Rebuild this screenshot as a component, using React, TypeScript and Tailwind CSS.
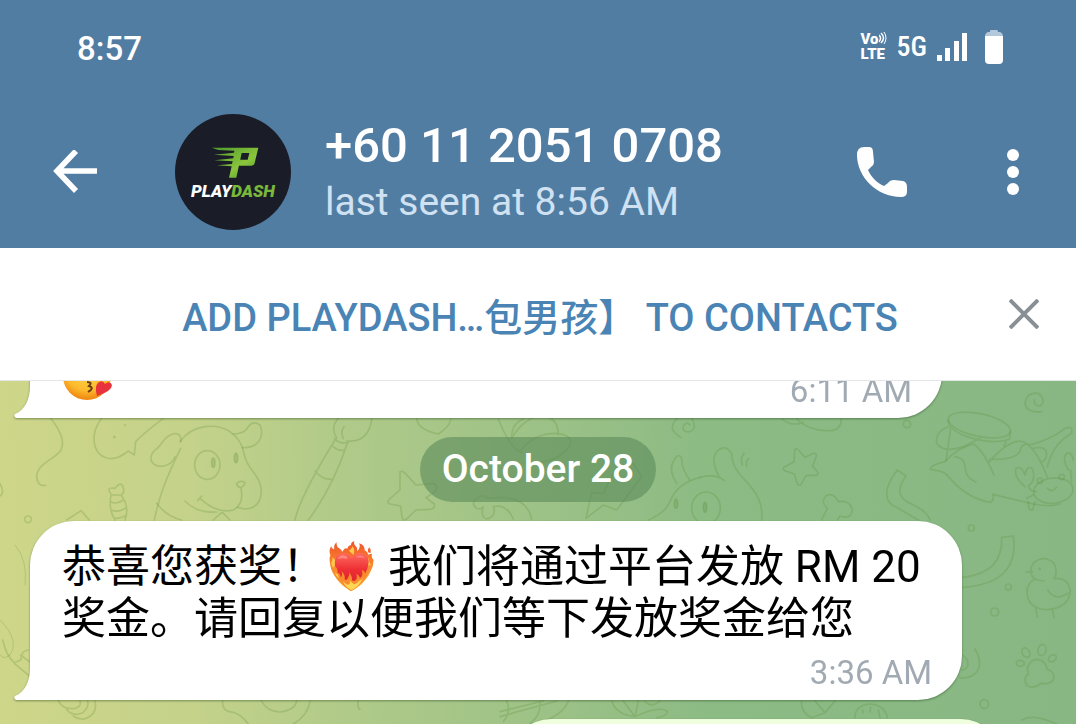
import React from "react";

interface BubbleProps {
  className?: string;
  children: React.ReactNode;
}

function ChatWallpaper() {
  return (
    <svg
      className="absolute inset-0 w-full h-full"
      viewBox="0 381 1076 343"
      preserveAspectRatio="xMidYMid slice"
      aria-hidden="true"
    >
      <defs>
        <linearGradient id="wall" gradientUnits="userSpaceOnUse" x1="0" y1="560" x2="1076" y2="540">
          <stop offset="0" stopColor="#ced689" />
          <stop offset="0.18" stopColor="#c4d28a" />
          <stop offset="0.32" stopColor="#b0ca89" />
          <stop offset="0.5" stopColor="#9dc287" />
          <stop offset="0.66" stopColor="#8cbb84" />
          <stop offset="1" stopColor="#88b784" />
        </linearGradient>
      </defs>
      <rect y="381" width="1076" height="343" fill="url(#wall)" />
      <g fill="none" stroke="#5c8c34" strokeOpacity="0.24" strokeWidth="5" strokeLinecap="round" strokeLinejoin="round">
        {/* dog, speech blob, candy and brush */}
        <g transform="translate(0 370) scale(.3333)">
          <path d="M152 145 Q200 205 183 240 C170 265 110 280 110 320 Q112 350 137 346" />
          <path d="M305 145 C270 190 275 250 320 264 Q350 272 385 243 L403 255 L407 215 Q430 190 490 145" />
          <path d="M463 450 C478 380 495 330 542 235 M540 215 C580 160 650 160 690 185 Q725 210 732 250 C740 300 780 310 784 360 Q784 415 735 417 L712 412" />
          <path d="M542 215 Q545 190 525 191 C490 195 485 230 465 240 C445 260 450 285 480 289 Q515 288 525 260 M700 192 Q735 192 745 170 Q760 150 780 165 C795 200 775 235 728 233" />
          <ellipse cx="622" cy="285" rx="38" ry="43" />
          <ellipse cx="640" cy="278" rx="5" ry="14" fill="#568b3c" fillOpacity="0.2" />
          <ellipse cx="708" cy="264" rx="5" ry="14" fill="#568b3c" fillOpacity="0.2" />
          <path d="M710 340 Q722 330 735 338 Q732 352 720 352 Q710 350 710 340 M722 352 Q735 400 700 420 Q650 432 600 385 M593 392 L605 378 M555 393 Q590 430 650 426 M470 400 Q500 440 545 450 M668 428 L690 450 M665 428 L640 450" />
          <path d="M335 375 Q315 350 345 355 Q365 330 370 355 Q375 370 362 375 Z M333 375 Q325 420 345 450 M363 375 Q390 410 375 450 M332 395 Q350 405 370 390 M334 420 Q355 430 380 412 M345 445 Q365 445 380 435" />
          <path d="M200 450 L243 422 L268 450 M0 340 Q15 370 0 378" />
          <circle cx="84" cy="448" r="10" />
          <circle cx="343" cy="201" r="2" />
          <circle cx="375" cy="165" r="1" />
          <path d="M885 450 Q900 380 1005 210 M925 450 Q1000 350 1042 220 M1003 205 Q1020 225 1045 217 M1000 230 Q1015 245 1035 240 M945 303 Q965 330 1000 328 M1010 205 Q990 170 1015 145 M1030 205 Q1020 185 1032 170 M1040 213 Q1105 220 1116 147" />
        </g>
        {/* star, leaf, bone, bolt and swirl */}
        <g transform="translate(340 370) scale(.3333)">
          <path d="M180 305 Q190 300 205 320 L228 345 L280 340 Q298 350 285 365 L258 383 L283 402 Q285 418 270 418 L228 420 L200 447 Q188 455 186 440 L182 408 L150 402 Q138 398 148 388 L180 360 Z" />
          <path d="M230 147 Q235 180 295 192 Q330 170 332 147 M475 147 Q510 235 545 248 M515 205 Q515 160 550 147 M515 205 Q560 130 620 140 Q655 150 655 195 M545 240 Q580 190 650 190 Q700 195 690 225 Q660 280 555 280" />
          <path d="M445 385 Q430 370 410 385 Q390 400 410 415 Q425 420 430 410 Q420 440 440 447 Q470 440 460 410 Q500 400 520 447 M445 385 Q560 370 575 447" />
          <path d="M738 445 L755 368 L790 370 L830 290 L880 280 L905 320 L830 420 L790 405 Z" />
          <path d="M1022 202 Q985 180 1003 155 Q1020 130 1055 145 Q1075 180 1045 186 Q1025 185 1030 168 Q1040 152 1050 165" />
          <path d="M1010 340 Q985 300 1000 275 Q1015 245 1025 265 Q1025 300 1050 330" />
          <path d="M925 450 Q975 430 990 395 Q1010 340 1080 322" />
          <ellipse cx="1008" cy="401" rx="5" ry="14" fill="#568b3c" fillOpacity="0.2" />
        </g>
        {/* creature, small star, bone, jumping cat with a drum, crab */}
        <g transform="translate(700 370) scale(.3333)">
          <path d="M0 322 Q50 310 72 332 M60 325 Q30 270 50 245 Q75 220 95 250 C95 300 130 320 160 360 Q190 400 185 450" />
          <ellipse cx="18" cy="414" rx="43" ry="48" />
          <ellipse cx="15" cy="412" rx="5" ry="15" fill="#568b3c" fillOpacity="0.2" />
          <path d="M132 250 Q120 265 127 285 M146 265 Q136 275 140 290" />
          <path d="M284 240 Q288 232 295 240 L315 262 L342 250 Q352 250 348 262 L338 288 L354 308 Q354 318 344 316 L318 317 L304 342 Q297 350 292 341 L283 312 L254 302 Q245 296 254 290 L282 275 Z" />
          <path d="M247 147 Q270 170 310 158 M290 147 Q330 185 390 182 Q425 180 423 147" />
          <circle cx="621" cy="162" r="11" />
          <path d="M365 450 L382 415 Q360 395 378 378 Q400 365 415 395 Q450 390 457 418 Q455 450 420 438 L412 450" />
          <path d="M592 300 L618 318 Q580 370 620 395 Q680 420 690 450 M592 300 C545 360 555 400 590 412 Q620 430 655 450" />
          <path d="M1025 125 Q980 130 975 100 Q980 65 1015 70 Q1040 90 1022 107 Q1000 110 1003 90" />
          <ellipse cx="838" cy="165" rx="95" ry="34" transform="rotate(12 838 165)" />
          <path d="M745 150 Q740 175 800 200 Q880 225 928 208 L932 185 M745 170 Q705 185 710 220 Q730 250 790 230 L840 205 M752 175 L738 272 M918 215 L912 228" />
          <path d="M820 222 Q770 235 735 275 Q690 285 692 298 Q740 305 745 320 Q800 385 870 397 Q885 390 878 373 L1000 402 Q1050 412 1080 402 M820 222 Q850 240 882 315 M765 260 C820 270 770 310 828 336" />
          <path d="M868 275 Q930 205 970 215 Q1010 235 1042 322 M868 268 Q960 270 962 235 Q975 215 990 225 Q1060 205 1095 175 Q1120 165 1115 190 Q1060 220 1042 290 M1000 235 Q1040 225 1040 255 Q1035 275 1025 275" />
          <ellipse cx="1060" cy="362" rx="59" ry="38" transform="rotate(-6 1060 362)" />
          <path d="M975 350 Q940 320 948 295 Q965 285 975 315 Q980 285 997 295 Q1010 330 985 348 Q990 365 1008 365 M1105 300 Q1085 265 1100 250 Q1115 245 1120 270 M1112 300 L1115 335 M1042 355 Q1055 370 1070 352" />
          <circle cx="1020" cy="332" r="8" />
          <circle cx="1085" cy="321" r="8" />
          <path d="M980 385 L1000 375 M985 395 Q985 425 998 420 L1005 395" />
          <circle cx="814" cy="474" r="9" />
        </g>
        {/* right margin: horn, chick, paw */}
        <g transform="translate(940 500) scale(.3333)">
          <path d="M68 232 Q190 220 185 112 L220 108 Q240 250 68 262" />
          <circle cx="205" cy="261" r="9" />
          <circle cx="164" cy="336" r="12" />
          <circle cx="133" cy="612" r="13" />
          <path d="M285 240 Q262 215 280 190 Q310 162 342 190 Q355 215 342 236 Q385 230 391 275 Q385 325 320 329 Q262 325 261 275 Q262 250 285 236 Q295 243 312 243 M278 215 L258 216 M323 270 Q345 305 384 280 M287 325 L292 352 M337 328 L342 352" />
          <circle cx="299" cy="206" r="2" />
          <path d="M262 505 Q270 478 292 478 Q315 480 322 508 Q345 515 341 538 Q330 555 305 550 Q275 570 260 555 Q248 535 265 522 Z" />
          <ellipse cx="258" cy="458" rx="11" ry="15" transform="rotate(-30 258 458)" />
          <ellipse cx="306" cy="450" rx="12" ry="17" transform="rotate(12 306 450)" />
          <ellipse cx="337" cy="475" rx="13" ry="9" transform="rotate(-35 337 475)" />
          <ellipse cx="241" cy="490" rx="12" ry="9" />
          <path d="M66 465 Q85 475 84 495 Q78 510 66 510 M105 447 Q135 500 100 525 Q80 537 60 533" />
          <path d="M245 660 Q280 640 350 672" />
        </g>
        {/* bottom edge and left margin */}
        <g transform="translate(0 640) scale(.3333)">
          <path d="M8 0 Q20 50 43 68 L62 60 Q65 30 85 30 M43 70 L88 108 M62 45 L88 65" />
          <path d="M175 183 Q190 210 225 205 Q245 200 240 183 M200 208 Q215 230 245 220 Q268 205 263 183 M220 228 Q250 250 280 220 Q290 205 285 183" />
          <path d="M668 183 Q665 215 700 217 Q725 225 745 252 M785 183 Q800 215 840 216 Q885 210 890 183 M930 183 Q925 225 880 252 M1075 183 Q1070 200 1080 208" />
        </g>
        <g transform="translate(500 690) scale(.3333)">
          <path d="M0 65 L130 33 M0 80 L170 33 M20 33 Q35 65 10 95 M120 33 Q125 75 90 100 M205 33 Q190 75 115 100 M335 33 Q350 75 405 80 M370 33 L405 80 L415 33 M405 80 Q480 45 503 65 Q500 80 470 83 M435 35 Q455 55 480 33 M905 33 Q900 65 935 83 M945 33 L975 68 L1005 33 M935 83 L975 68 M1065 83 Q1065 45 1110 42 Q1155 45 1162 83 M1088 60 L1088 68 M1112 52 L1110 66 M1135 60 L1140 83" />
        </g>
        <path d="M0 620 Q20 640 10 655 Q4 660 0 655 M15 545 Q28 560 25 585" strokeWidth="1" />
      </g>
    </svg>
  );
}

function PlaydashAvatar() {
  return (
    <div className="relative shrink-0 w-[116px] h-[116px] rounded-full bg-[#1a1d27] overflow-hidden">
      <svg className="absolute left-9 top-8 w-12 h-8" viewBox="150 137 144 96" aria-hidden="true">
        <defs>
          <linearGradient id="logo" x1="0" y1="0" x2="1" y2="1">
            <stop offset="0" stopColor="#4c9a2c" />
            <stop offset="0.6" stopColor="#8ac53c" />
            <stop offset="1" stopColor="#4f9b31" />
          </linearGradient>
        </defs>
        <path
          fill="url(#logo)"
          d="M152 142 H292 L281 188 Q279 196 270 196 H234 L237 178 H260 L265 158 H242 L226 232 H204 L212 198 L168 195 L213 191 L215 183 L160 180 L217 174 L218 167 L158 163 L219 157 L220 151 L172 149 Z"
        />
      </svg>
      <div className="absolute inset-x-0 top-[66px] text-center text-[17px] leading-[22px] font-black italic text-white">
        PLAY<span className="text-[#79b83a]">DASH</span>
      </div>
    </div>
  );
}

function StatusBar() {
  return (
    <div className="flex items-center justify-between h-24 pl-[77px] pr-[73px]">
      <span className="pt-px text-[33px] leading-10 font-medium">8:57</span>
      <div className="flex items-center pb-[2px]">
        <div className="flex flex-col text-[15px] leading-[15px] font-black">
          <div className="flex h-[15px]">
            <span>Vo</span>
            <svg className="w-2 h-3" viewBox="0 0 8 12" fill="none" stroke="white" strokeWidth="1.5" aria-hidden="true">
              <path d="M0 3 Q3 6 0 10 M2 1 Q7 6 2 11" />
              <path d="M5 0 Q9 6 5 12" strokeWidth="1" />
            </svg>
          </div>
          <span>LTE</span>
        </div>
        <span className="ml-[10px] text-[28px] leading-8 font-medium font-['Roboto_Condensed','Liberation_Sans_Narrow',Roboto,sans-serif]">
          5G
        </span>
        <svg className="ml-[10px] w-8 h-7" viewBox="0 0 32 28" fill="white" aria-label="Signal">
          <rect x="0" y="22" width="5" height="6" />
          <rect x="8" y="15" width="5" height="13" />
          <rect x="17" y="8" width="5" height="20" />
          <rect x="25" y="0" width="5" height="28" />
        </svg>
        <svg className="ml-4 w-[18px] h-[34px]" viewBox="0 0 18 34" aria-label="Battery">
          <path d="M5 1 Q5 0 6 0 H12 Q13 0 13 2 H15 Q18 3 18 7 H0 Q0 3 3 2 H5 Z" fill="#b4c8dc" />
          <path d="M0 6 H18 V30 Q18 34 14 34 H4 Q0 34 0 30 Z" fill="white" />
        </svg>
      </div>
    </div>
  );
}

function IncomingBubble({ className = "", children }: BubbleProps) {
  return (
    <div
      className={`relative self-start ml-[30px] max-w-full bg-white rounded-t-[44px] rounded-br-[44px] pl-8 pr-[30px] pt-5 pb-[11px] drop-shadow-[0_1px_1px_rgba(40,70,30,0.5)] ${className}`}
    >
      <svg className="absolute -left-4 bottom-0 w-[17px] h-8" viewBox="0 0 17 32" fill="white" aria-hidden="true">
        <path d="M17 0 H16 C16 13 11 24 1 28 Q-1 30 2 32 H17 Z" />
      </svg>
      {children}
    </div>
  );
}

function KissEmoji() {
  return (
    <svg className="w-[52px] h-[52px] self-start" viewBox="0 0 52 52" role="img" aria-label="Face blowing a kiss">
      <defs>
        <radialGradient id="face" cx="0.5" cy="0.35" r="0.65">
          <stop offset="0" stopColor="#ffdf4a" />
          <stop offset="0.7" stopColor="#fdb92c" />
          <stop offset="1" stopColor="#ee8512" />
        </radialGradient>
      </defs>
      <circle cx="25" cy="27" r="24" fill="url(#face)" />
      <path d="M13 20 Q17 15 21 20 M31 20 Q35 16 39 20" fill="none" stroke="#6b3f12" strokeWidth="3" />
      <path d="M25 33 Q31 33 27 37 Q33 39 26 43" fill="none" stroke="#6b3f12" strokeWidth="2" />
      <path d="M35 47 Q32 36 37 33 Q41 31 43 35 Q48 31 50 36 Q50 42 35 47 Z" fill="#e8323c" />
    </svg>
  );
}

function FireHeartEmoji() {
  return (
    <svg className="inline-block mx-[2px] -mt-2 w-[47px] h-[51px]" viewBox="84 60 141 156" role="img" aria-label="Heart on fire">
      <defs>
        <linearGradient id="flame" x1="0" y1="0" x2="0" y2="1">
          <stop offset="0" stopColor="#f0542b" />
          <stop offset="0.5" stopColor="#f98a2e" />
          <stop offset="1" stopColor="#fbb93b" />
        </linearGradient>
        <linearGradient id="heart" x1="0" y1="0" x2="0" y2="1">
          <stop offset="0" stopColor="#ff6b60" />
          <stop offset="0.45" stopColor="#ee2f34" />
          <stop offset="1" stopColor="#d31d2b" />
        </linearGradient>
      </defs>
      <path
        fill="url(#flame)"
        d="M153 214 C130 202 104 178 92 146 Q84 112 90 104 Q84 90 92 76 Q98 90 102 82 Q99 73 109 64 Q107 78 118 83 Q125 86 126 94 Q134 78 142 84 Q144 72 153 73 Q152 64 163 61 Q160 72 169 77 Q173 82 172 91 Q184 80 178 67 Q194 71 195 88 Q204 92 206 102 Q213 98 217 99 Q214 110 222 118 Q222 136 214 150 C203 178 178 202 153 214 Z"
      />
      <path fill="#f2602f" d="M207 96 Q201 88 209 79 Q216 88 213 96 Z" />
      <path fill="#fcc94a" d="M92 128 Q98 120 96 110 Q108 118 108 132 L98 142 Z M215 132 Q206 126 208 112 Q199 120 204 137 Z M146 90 Q154 86 158 76 Q167 88 160 102 Z" />
      <path
        fill="url(#heart)"
        d="M153 208 C122 184 99 153 104 119 Q109 97 130 97 Q147 98 154 113 Q162 97 181 97 Q203 98 207 121 C207 155 180 188 153 208 Z"
      />
      <path fill="#ff9c92" fillOpacity="0.7" d="M112 116 Q118 102 132 104 Q144 108 142 114 Q124 110 112 116 Z M167 110 Q180 99 196 111 Q182 109 167 110 Z" />
      <path
        fill="#f98a2e"
        d="M153 213 Q131 198 117 182 Q101 167 94 143 Q106 152 104 138 Q112 142 112 156 Q121 160 122 172 Q128 164 124 152 Q136 164 134 178 Q141 182 144 172 Q150 164 147 156 Q158 168 156 180 Q164 186 170 176 Q173 168 169 160 Q180 166 180 174 Q192 166 186 148 Q196 152 196 160 Q204 150 210 140 C206 170 178 200 153 213 Z"
      />
      <path fill="#ffd755" d="M154 211 Q134 199 128 182 Q138 195 147 193 Q152 188 149 180 Q156 190 164 192 Q175 187 177 182 Q184 182 191 172 Q176 202 154 211 Z M103 155 Q109 162 112 163 L117 174 Q107 168 103 155 Z" />
    </svg>
  );
}

export default function App() {
  return (
    <div className="flex flex-col h-screen overflow-hidden bg-white font-[Roboto,'Noto_Sans_CJK_SC',sans-serif]">
      <header className="shrink-0 bg-[#527da3] text-white">
        <StatusBar />
        <div className="flex items-center h-38 pl-[53px] pr-[57px]">
          <button type="button" aria-label="Back" className="shrink-0">
            <svg className="w-11 h-11" viewBox="0 0 44 44" fill="none" stroke="white" strokeWidth="5.6">
              <path d="M44 21 H4 M23 1 L4 21 L23 41" />
            </svg>
          </button>
          <div className="ml-[78px]">
            <PlaydashAvatar />
          </div>
          <div className="ml-[34px] pt-1 flex-1 min-w-0 whitespace-nowrap">
            <h1 className="text-[49px] leading-[56px] font-medium">+60 11 2051 0708</h1>
            <p className="text-[39px] leading-14 text-[#d0e2f2]">last seen at 8:56 AM</p>
          </div>
          <button type="button" aria-label="Call" className="shrink-0">
            <svg className="w-[50px] h-[50px]" viewBox="0 0 50 50" fill="white">
              <path d="M0 8 Q0 0 7 0 H12 Q16 0 16 5 L17 15 Q17 18 14 20 L11 23 C14 30 20 36 27 39 L31 36 Q33 33 37 33 L46 34 Q50 35 50 40 V45 Q50 50 44 50 C20 50 0 30 0 8 Z" />
            </svg>
          </button>
          <button type="button" aria-label="More options" className="ml-[100px] shrink-0">
            <svg className="w-3 h-[46px]" viewBox="0 0 12 46" fill="white">
              <circle cx="6" cy="6" r="6" />
              <circle cx="6" cy="23" r="6" />
              <circle cx="6" cy="40" r="6" />
            </svg>
          </button>
        </div>
      </header>

      {/* Add contact bar */}
      <div className="flex shrink-0 items-stretch h-[133px] bg-white border-b border-[#e4e6e8]">
        <button
          type="button"
          className="flex-1 pl-[108px] pt-2 text-[38px] leading-[52px] font-medium text-[#4a84b5] whitespace-nowrap"
        >
          ADD PLAYDASH…包男孩】 TO CONTACTS
        </button>
        <button type="button" aria-label="Close" className="flex items-center justify-center w-[104px] shrink-0">
          <svg className="w-[30px] h-[30px]" viewBox="0 0 30 30" fill="none" stroke="#889096" strokeWidth="4">
            <path d="M1 1 L29 29 M29 1 L1 29" />
          </svg>
        </button>
      </div>

      <main className="relative flex-1 min-h-0 overflow-hidden">
        <ChatWallpaper />
        <div className="relative flex flex-col gap-[19px] -mt-[52px]">
          <IncomingBubble className="w-[912px]">
            <div className="flex items-end justify-between h-[58px]">
              <KissEmoji />
              <time className="text-[33px] leading-8 text-[#a1aab3]">6:11 AM</time>
            </div>
          </IncomingBubble>

          <div className="self-center rounded-full bg-[#5c8a5a]/60 px-[22px] text-[39px] leading-[65px] font-medium text-white">
            October 28
          </div>

          <IncomingBubble className="w-[932px]">
            <p className="text-[44px] leading-[52px] text-black">
              恭喜您获奖！
              <FireHeartEmoji /> 我们将通过平台发放 RM 20
              <br />
              奖金。请回复以便我们等下发放奖金给您
            </p>
            <time className="block mt-3 text-right text-[33px] leading-8 text-[#a1aab3]">3:36 AM</time>
          </IncomingBubble>

          <div className="self-end mr-[75px] w-[490px] h-20 max-w-full rounded-[44px] bg-[#efffde] drop-shadow-[0_1px_1px_rgba(40,70,30,0.5)]" />
        </div>
      </main>
    </div>
  );
}
